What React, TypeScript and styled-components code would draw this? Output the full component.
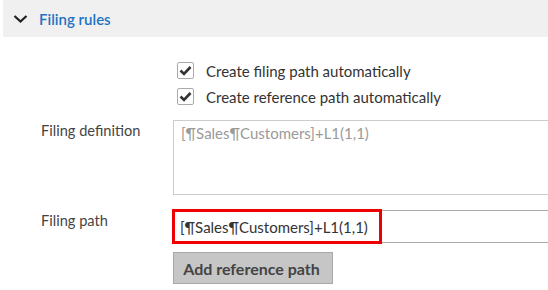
import React from "react";
import styled, { createGlobalStyle } from "styled-components";

const GlobalStyle = createGlobalStyle`
  html, body {
    margin: 0;
    padding: 0;
    background: #fff;
    font-family: Lato, "Open Sans", sans-serif;
    color: #444;
  }
`;

const Page = styled.div`
  width: 548px;
  height: 290px;
  padding-left: 3px;
  box-sizing: border-box;
  overflow: hidden;
`;

const SectionHeader = styled.div`
  height: 37px;
  background: #f0f0f0;
  display: flex;
  align-items: center;
  gap: 11px;
  padding-left: 10px;
`;

const SectionTitle = styled.span`
  color: #1f74c4;
  font-size: 15px;
  font-weight: 600;
`;

const Body = styled.div`
  padding-top: 25px;
`;

const Checks = styled.div`
  display: flex;
  flex-direction: column;
  gap: 9px;
  padding-left: 174px;
  margin-bottom: 15px;
`;

const CheckRow = styled.label`
  display: flex;
  align-items: center;
  gap: 12px;
  font-size: 15px;
  color: #333;
  height: 17px;
`;

const Box = styled.span`
  width: 15px;
  height: 15px;
  border: 1px solid #aaa;
  border-radius: 2px;
  background: #fff;
  display: flex;
  align-items: center;
  justify-content: center;
`;

const FieldRow = styled.div<{ $gap?: number }>`
  display: grid;
  grid-template-columns: 170px 1fr;
  margin-bottom: ${(p) => p.$gap ?? 0}px;
`;

const Label = styled.div`
  padding-left: 38px;
  font-size: 14.6px;
  color: #444;
  padding-top: 2px;
`;

const TextArea = styled.div`
  height: 75px;
  border: 1px solid #ccc;
  border-right: none;
  box-sizing: border-box;
  padding: 3px 7px;
  font-size: 15px;
  color: #9a9a9a;
`;

const Input = styled.div`
  height: 33px;
  border-top: 1px solid #aaa;
  border-bottom: 1px solid #aaa;
  box-sizing: border-box;
  display: flex;
  font-size: 15px;
  color: #333;
`;

const Highlight = styled.span`
  margin: -2px 0 -2px -1px;
  border: 3px solid #ee0000;
  padding: 0 11px 0 5px;
  display: flex;
  align-items: center;
`;

const Actions = styled.div`
  padding-left: 170px;
  padding-top: 9px;
`;

const Button = styled.button`
  height: 32px;
  width: 160px;
  background: #c6c6c6;
  border: 1px solid #a8a8a8;
  font-family: inherit;
  font-size: 16px;
  font-weight: 700;
  color: #444;
  padding: 0 3px 0 0;
`;

const Chevron = () => (
  <svg width="15" height="10" viewBox="0 0 15 10">
    <path d="M1.5 2 L7.5 7.5 L13.5 2" fill="none" stroke="#222" strokeWidth="2.3" />
  </svg>
);

const Check = () => (
  <svg width="13" height="11" viewBox="0 0 13 11">
    <path d="M1.5 5.5 L5 9 L11.5 2" fill="none" stroke="#333" strokeWidth="2.6" />
  </svg>
);

const PATH = "[¶Sales¶Customers]+L1(1,1)";

export default function App() {
  return (
    <Page>
      <GlobalStyle />
      <SectionHeader>
        <Chevron />
        <SectionTitle>Filing rules</SectionTitle>
      </SectionHeader>
      <Body>
        <Checks>
          <CheckRow>
            <Box>
              <Check />
            </Box>
            Create filing path automatically
          </CheckRow>
          <CheckRow>
            <Box>
              <Check />
            </Box>
            Create reference path automatically
          </CheckRow>
        </Checks>
        <FieldRow $gap={15}>
          <Label>Filing definition</Label>
          <TextArea>{PATH}</TextArea>
        </FieldRow>
        <FieldRow>
          <Label>Filing path</Label>
          <Input>
            <Highlight>{PATH}</Highlight>
          </Input>
        </FieldRow>
        <Actions>
          <Button>Add reference path</Button>
        </Actions>
      </Body>
    </Page>
  );
}
